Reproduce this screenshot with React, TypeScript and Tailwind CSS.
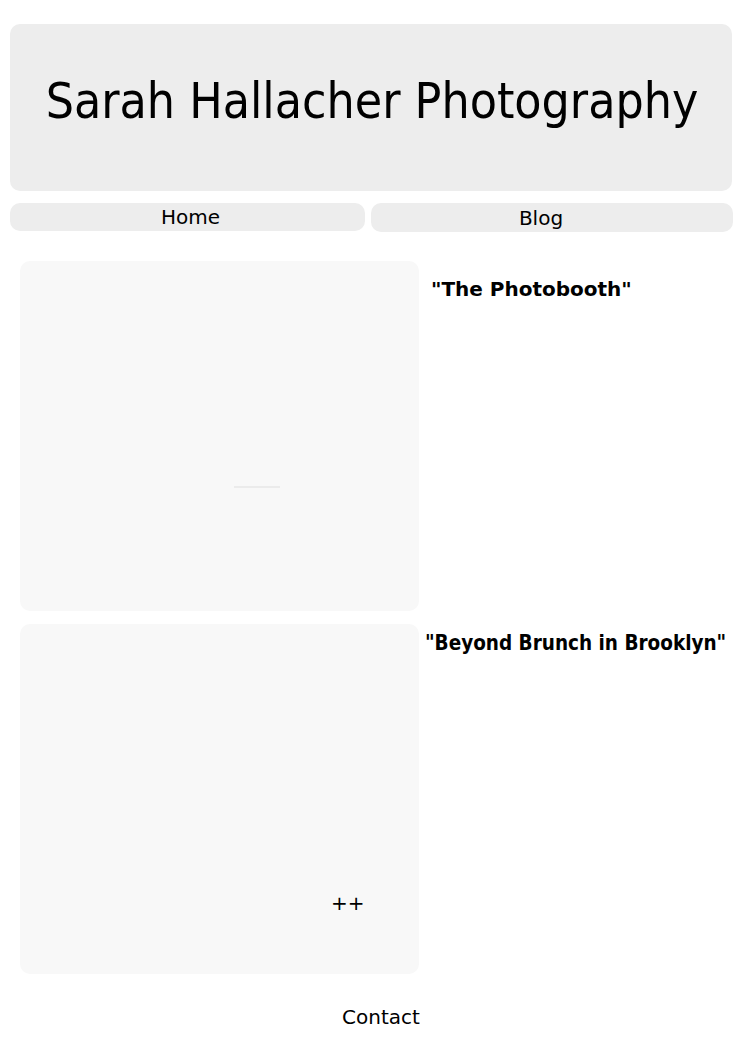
import React from 'react'

const posts = [
  { title: '"The Photobooth"', mark: 'line', cls: "text-[20px] pl-[12px] pt-[13px] font-['DejaVu_Sans',sans-serif]" },
  { title: '"Beyond Brunch in Brooklyn"', mark: 'plus', cls: "text-[20.5px] pl-[6px] pt-[4px] font-['DejaVu_Sans_Condensed','DejaVu_Sans',sans-serif]" },
]

export default function App() {
  return (
    <div className="min-h-[1053px] bg-white text-black font-['DejaVu_Sans',sans-serif]">
      <div className="pl-[10px] pr-[12px] pt-6">
        <header className="h-[167px] mr-[1px] rounded-[10px] bg-[#ededed] flex items-center justify-center">
          <h1 className="font-['DejaVu_Sans_Condensed','DejaVu_Sans',sans-serif] text-[49.5px] leading-none pb-[12px] pl-[2px]">
            Sarah Hallacher Photography
          </h1>
        </header>

        <nav className="mt-3 flex gap-[6px] items-start">
          <a className="w-[355px] h-[28px] rounded-[10px] bg-[#ededed] flex items-center justify-center pl-[6px] text-[20px]">Home</a>
          <a className="flex-1 h-[29px] rounded-[10px] bg-[#ededed] flex items-center justify-center pr-[22px] text-[20px]">Blog</a>
        </nav>
      </div>

      <main className="mt-[29px] flex flex-col gap-[13px] pl-5">
        {posts.map((p) => (
          <div key={p.title} className="flex">
            <div className="w-[399px] h-[350px] rounded-[10px] bg-[#f8f8f8] relative">
              {p.mark === 'line' ? (
                <div className="absolute left-[214px] top-[225px] w-[46px] h-[2px] bg-[#ebebeb]" />
              ) : (
                <span className="absolute left-[311px] top-[264px] text-[20px]">++</span>
              )}
            </div>
            <h2 className={'flex-1 font-bold ' + p.cls}>{p.title}</h2>
          </div>
        ))}
      </main>

      <footer className="mt-[28px] pl-[342px] text-[20px]">Contact</footer>
    </div>
  )
}
